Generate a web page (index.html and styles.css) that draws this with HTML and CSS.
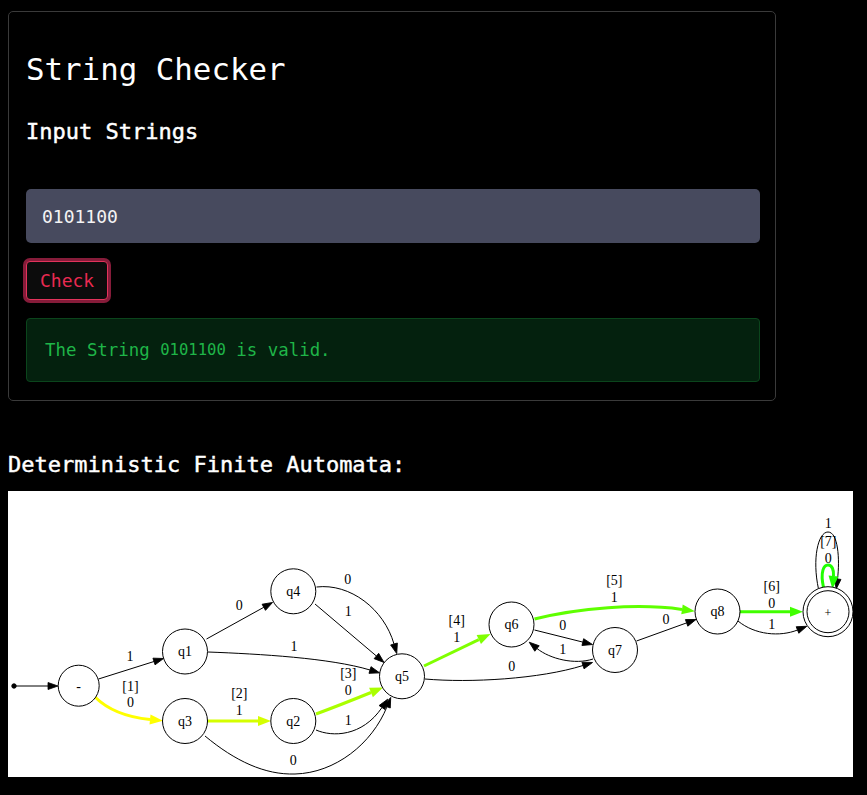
FILE: index.html
```html
<!DOCTYPE html>
<html lang="en">
<head>
<meta charset="utf-8">
<title>String Checker</title>
<link rel="stylesheet" href="styles.css">
</head>
<body>
<main class="page">
  <section class="card">
    <h1 class="title">String Checker</h1>
    <h3 class="subtitle">Input Strings</h3>
    <input class="field" type="text" value="0101100">
    <button class="check-btn" type="button">Check</button>
    <div class="result">The String&nbsp;<code class="result-code">0101100</code>&nbsp;is valid.</div>
  </section>

  <h3 class="dfa-title">Deterministic Finite Automata:</h3>

  <div class="graph">
    <svg class="graph-svg" width="845" height="286" viewBox="8 492 845 286" xmlns="http://www.w3.org/2000/svg">
      <defs>
        <marker id="a-k" markerUnits="userSpaceOnUse" markerWidth="11" markerHeight="9" refX="0" refY="4.5" orient="auto" overflow="visible">
          <path d="M0,1 L10,4.5 L0,8 Z" fill="#000" stroke="#000" stroke-width="0.8"/>
        </marker>
        <marker id="a-y1" markerUnits="userSpaceOnUse" markerWidth="14" markerHeight="11" refX="0" refY="5.5" orient="auto" overflow="visible">
          <path d="M0,0.5 L13,5.5 L0,10.5 Z" fill="#ffff00"/>
        </marker>
        <marker id="a-y2" markerUnits="userSpaceOnUse" markerWidth="14" markerHeight="11" refX="0" refY="5.5" orient="auto" overflow="visible">
          <path d="M0,0.5 L13,5.5 L0,10.5 Z" fill="#d5ff00"/>
        </marker>
        <marker id="a-y3" markerUnits="userSpaceOnUse" markerWidth="14" markerHeight="11" refX="0" refY="5.5" orient="auto" overflow="visible">
          <path d="M0,0.5 L13,5.5 L0,10.5 Z" fill="#aaff00"/>
        </marker>
        <marker id="a-y4" markerUnits="userSpaceOnUse" markerWidth="14" markerHeight="11" refX="0" refY="5.5" orient="auto" overflow="visible">
          <path d="M0,0.5 L13,5.5 L0,10.5 Z" fill="#80ff00"/>
        </marker>
        <marker id="a-y5" markerUnits="userSpaceOnUse" markerWidth="14" markerHeight="11" refX="0" refY="5.5" orient="auto" overflow="visible">
          <path d="M0,0.5 L13,5.5 L0,10.5 Z" fill="#5fff00"/>
        </marker>
        <marker id="a-y6" markerUnits="userSpaceOnUse" markerWidth="14" markerHeight="11" refX="0" refY="5.5" orient="auto" overflow="visible">
          <path d="M0,0.5 L13,5.5 L0,10.5 Z" fill="#40ff00"/>
        </marker>
        <marker id="a-y7" markerUnits="userSpaceOnUse" markerWidth="14" markerHeight="11" refX="0" refY="5.5" orient="auto" overflow="visible">
          <path d="M0,0.5 L13,5.5 L0,10.5 Z" fill="#20ff00"/>
        </marker>
      </defs>

      <rect x="8" y="492" width="845" height="286" fill="#fff"/>

      <!-- edges -->
      <g class="edges" fill="none" stroke="#000" stroke-width="1">
        <circle cx="14" cy="687" r="2.2" fill="#000"/>
        <path d="M16,687 L48,687" marker-end="url(#a-k)"/>
        <path d="M98.5,680 L154,662.5" marker-end="url(#a-k)"/>
        <path d="M206.5,640 L263.8,608.3" marker-end="url(#a-k)"/>
        <path d="M208,653 C260,655 330,659 370,671" marker-end="url(#a-k)"/>
        <path d="M205,737 C235,762 265,776 295,775 C335,774 372,745 387,707.7" marker-end="url(#a-k)"/>
        <path d="M316.5,588 C350,584 384,610 394,645" marker-end="url(#a-k)"/>
        <path d="M315,605 L376.4,657" marker-end="url(#a-k)"/>
        <path d="M316,731 C332,738 362,738 382,708.5" marker-end="url(#a-k)"/>
        <path d="M425,680 C470,684 540,680 583,666.5" marker-end="url(#a-k)"/>
        <path d="M534.5,631 L582.8,643.1" marker-end="url(#a-k)"/>
        <path d="M593,660 C575,666 550,660 537,649.5" marker-end="url(#a-k)"/>
        <path d="M636.5,642 L686.6,623.9" marker-end="url(#a-k)"/>
        <path d="M738,622 C755,636 780,638 797.5,631" marker-end="url(#a-k)"/>
        <path d="M818.5,590 C812,560 818,533 828,533 C838,533 840,560 837.5,580" marker-end="url(#a-k)"/>
      </g>
      <g class="path-edges" fill="none" stroke-width="3">
        <path d="M95,698 C108,711 125,718 150,720.5" stroke="#ffff00" marker-end="url(#a-y1)"/>
        <path d="M207.5,722 L258,722" stroke="#d5ff00" marker-end="url(#a-y2)"/>
        <path d="M316,715 C335,708 355,700 371,693.5" stroke="#aaff00" marker-end="url(#a-y3)"/>
        <path d="M424,667 L478.8,640.6" stroke="#80ff00" marker-end="url(#a-y4)"/>
        <path d="M534.5,620 C578,609 638,604 682,610.4" stroke="#5fff00" marker-end="url(#a-y5)"/>
        <path d="M739.5,612.7 L790,612.7" stroke="#40ff00" marker-end="url(#a-y6)"/>
        <path d="M823.5,588.5 C820,572 824,566 828,566 C832,566 834,571 833.5,577" stroke="#20ff00" marker-end="url(#a-y7)"/>
      </g>

      <!-- nodes -->
      <g class="nodes" fill="#fff" stroke="#000" stroke-width="1">
        <circle cx="78.7" cy="686.7" r="20.5"/>
        <circle cx="185" cy="652.5" r="22.5"/>
        <circle cx="185" cy="722" r="22.5"/>
        <circle cx="293.3" cy="592.3" r="22.5"/>
        <circle cx="293.3" cy="722" r="22.5"/>
        <circle cx="402" cy="677.3" r="22.5"/>
        <circle cx="511.5" cy="625.5" r="22.5"/>
        <circle cx="615" cy="651" r="22.5"/>
        <circle cx="717.5" cy="612.5" r="22.5"/>
        <circle cx="828" cy="612.7" r="25"/>
        <circle cx="828" cy="612.7" r="21"/>
      </g>

      <g class="node-labels" text-anchor="middle">
        <text x="78.7" y="691.5">-</text>
        <text x="185" y="657.3">q1</text>
        <text x="185" y="726.8">q3</text>
        <text x="293.3" y="597.1">q4</text>
        <text x="293.3" y="726.8">q2</text>
        <text x="402" y="682.1">q5</text>
        <text x="511.5" y="630.3">q6</text>
        <text x="615" y="655.8">q7</text>
        <text x="717.5" y="617.3">q8</text>
        <text x="828" y="617.5" class="accept">+</text>
      </g>

      <g class="edge-labels" text-anchor="middle">
        <text x="130" y="661.5">1</text>
        <text x="130.5" y="691.5">[1]</text>
        <text x="130.5" y="707.5">0</text>
        <text x="239.3" y="611.3">0</text>
        <text x="294" y="652">1</text>
        <text x="239.3" y="699">[2]</text>
        <text x="239.3" y="716.3">1</text>
        <text x="293.3" y="766.3">0</text>
        <text x="347.7" y="584.6">0</text>
        <text x="348.3" y="617.3">1</text>
        <text x="348.3" y="679">[3]</text>
        <text x="348.3" y="696.3">0</text>
        <text x="348.3" y="726.3">1</text>
        <text x="456.7" y="625.7">[4]</text>
        <text x="456.7" y="643">1</text>
        <text x="511.7" y="672">0</text>
        <text x="562.7" y="630.6">0</text>
        <text x="562.7" y="655.3">1</text>
        <text x="614.3" y="585.7">[5]</text>
        <text x="614.3" y="603">1</text>
        <text x="666" y="625.3">0</text>
        <text x="771.7" y="591.7">[6]</text>
        <text x="771.7" y="608.6">0</text>
        <text x="771.7" y="629.6">1</text>
        <text x="828.3" y="528.6">1</text>
        <text x="828.3" y="546.7">[7]</text>
        <text x="828.3" y="563.9">0</text>
      </g>
    </svg>
  </div>
</main>
</body>
</html>
```

FILE: styles.css
```css
html, body {
  background: #000;
}

body {
  margin: 8px;
  color: #fff;
  font-family: "DejaVu Sans Mono", "Liberation Mono", monospace;
}

.page {
  display: flex;
  flex-direction: column;
  align-items: flex-start;
}

.card {
  margin-top: 3px;
  width: 768px;
  box-sizing: border-box;
  border: 1px solid #3a3a3a;
  border-radius: 5px;
  padding: 0 15px 18px 17px;
  display: flex;
  flex-direction: column;
}

.title {
  margin: 38px 0 0;
  font-size: 30.8px;
  line-height: 38px;
  font-weight: normal;
  color: #fff;
}

.subtitle {
  margin: 30px 0 0;
  font-size: 22px;
  line-height: 27px;
  font-weight: normal;
  color: #fff;
  -webkit-text-stroke: 0.45px #fff;
}

.field {
  margin: 44px 0 0;
  height: 54px;
  box-sizing: border-box;
  width: 100%;
  border: none;
  border-radius: 5px;
  background: #474a5e;
  color: #f4f4f4;
  padding: 0 16px;
  font-family: "DejaVu Sans Mono", "Liberation Mono", monospace;
  font-size: 18px;
  outline: none;
}

.check-btn {
  margin-top: 18px;
  align-self: flex-start;
  height: 39px;
  box-sizing: border-box;
  padding: 0 13px;
  border: 1px solid #e2335b;
  border-radius: 4px;
  background: #0c0c0c;
  color: #ea2a52;
  box-shadow: 0 0 0 3px #861c3a;
  font-family: "DejaVu Sans Mono", "Liberation Mono", monospace;
  font-size: 18px;
  cursor: pointer;
}

.result {
  margin-top: 18px;
  height: 64px;
  box-sizing: border-box;
  display: flex;
  align-items: center;
  padding: 0 18px;
  border: 1px solid #0b451c;
  border-radius: 4px;
  background: #04210e;
  color: #1fb548;
  font-size: 17.4px;
  white-space: nowrap;
}

.result-code {
  font-family: "DejaVu Sans Mono", "Liberation Mono", monospace;
  font-size: 15.6px;
}

.dfa-title {
  margin: 51px 0 13px;
  font-size: 22px;
  line-height: 26px;
  font-weight: normal;
  color: #fff;
  -webkit-text-stroke: 0.45px #fff;
}

.graph {
  display: flex;
}

.graph-svg {
  display: block;
  font-family: "Liberation Serif", "Times New Roman", serif;
  font-size: 14px;
}

.graph-svg text {
  fill: #000;
  stroke: none;
}

.graph-svg .accept {
  font-size: 12px;
}
```
